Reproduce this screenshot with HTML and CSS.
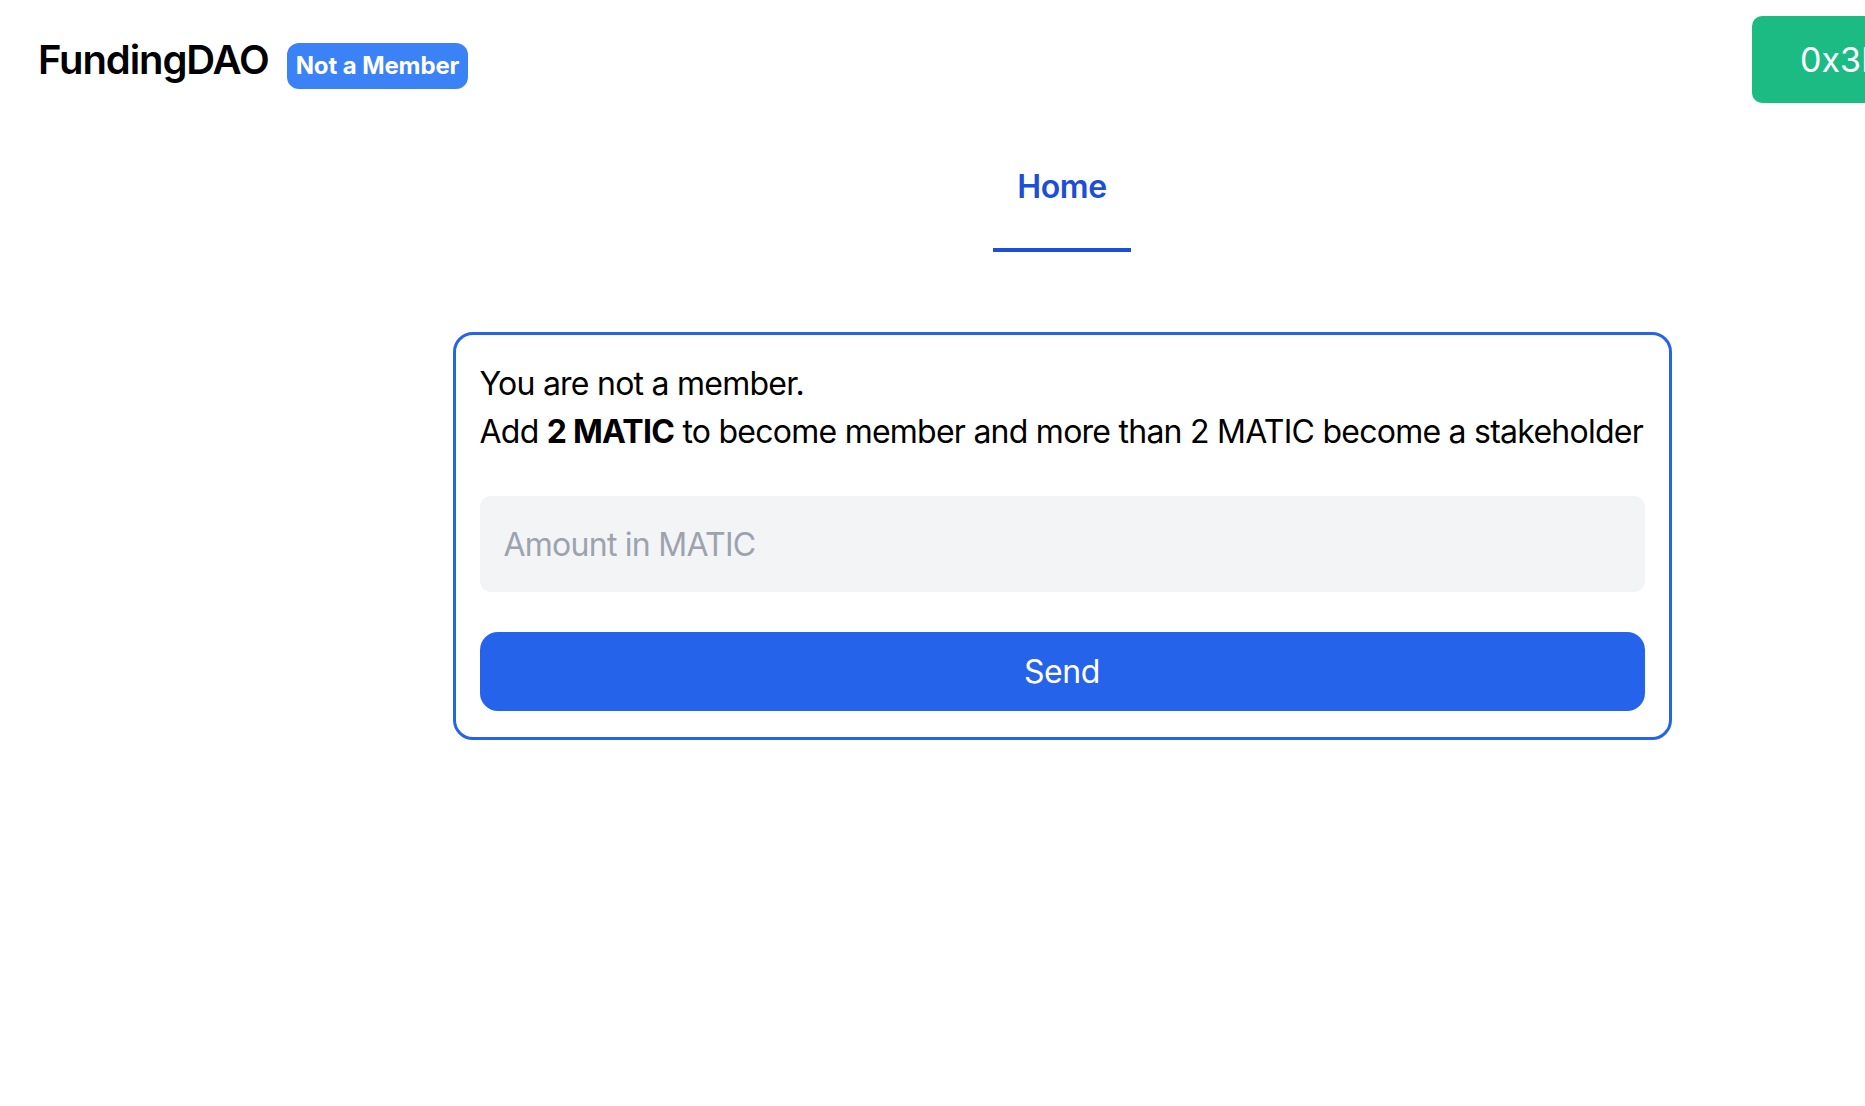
FILE: index.html
```html
<!DOCTYPE html>
<html lang="en">
<head>
<meta charset="utf-8">
<title>FundingDAO</title>
<link rel="stylesheet" href="styles.css">
</head>
<body>
<div class="page">
  <header class="topbar">
    <div class="brand">
      <h1 class="brand-title">FundingDAO</h1>
      <span class="badge">Not a Member</span>
    </div>
    <button class="wallet">0x3B9f...71aC</button>
  </header>

  <nav class="tabs">
    <a class="tab tab-active" href="#">Home</a>
  </nav>

  <main class="card">
    <p class="card-text">You are not a member.</p>
    <p class="card-text">Add <strong>2 MATIC</strong> to become member and more than 2 MATIC become a stakeholder</p>
    <input class="amount" type="text" placeholder="Amount in MATIC">
    <button class="send">Send</button>
  </main>
</div>
</body>
</html>
```

FILE: styles.css
```css
html, body {
  margin: 0;
  padding: 0;
  overflow: hidden;
  background: #ffffff;
}

body {
  font-family: Inter, "Noto Sans", "Liberation Sans", sans-serif;
  color: #000000;
}

.page {
  width: 2124px;
}

.topbar {
  display: flex;
  align-items: flex-start;
  justify-content: space-between;
  padding: 16px 32px 0 38px;
  height: 87px;
}

.brand {
  display: flex;
  align-items: baseline;
  gap: 18px;
  margin-top: 20px;
}

.brand-title {
  margin: 0;
  font-size: 40px;
  line-height: 48px;
  font-weight: 600;
  letter-spacing: -1.1px;
}

.badge {
  display: inline-block;
  background: #3b82f6;
  color: #ffffff;
  font-size: 24px;
  font-weight: 700;
  line-height: 46px;
  padding: 0 9px;
  border-radius: 12px;
  letter-spacing: -0.1px;
}

.wallet {
  width: 340px;
  height: 87px;
  border: none;
  border-radius: 10px;
  background: #1dbb84;
  color: #ffffff;
  font-family: Inter, "Liberation Sans", sans-serif;
  font-size: 34px;
  font-weight: 400;
  text-align: left;
  padding: 0 0 0 48px;
}

.tabs {
  display: flex;
  justify-content: center;
  margin-top: 36px;
}

.tab {
  display: block;
  padding: 24px 24px 37px;
  font-size: 32px;
  line-height: 48px;
  font-weight: 600;
  color: #1d4ed8;
  text-decoration: none;
  border-bottom: 4px solid #1d4ed8;
  letter-spacing: -0.4px;
}

.card {
  box-sizing: border-box;
  width: 1219px;
  margin: 80px auto 0;
  border: 3px solid #2563eb;
  border-radius: 20px;
  padding: 25px 24px 26px;
  display: flex;
  flex-direction: column;
}

.card-text {
  margin: 0;
  font-size: 32px;
  line-height: 48px;
  letter-spacing: -0.75px;
  white-space: nowrap;
}

.card-text strong {
  font-weight: 700;
}

.amount {
  box-sizing: border-box;
  margin-top: 40px;
  height: 96px;
  border: none;
  border-radius: 11px;
  background: #f3f4f6;
  padding: 0 24px;
  font-family: Inter, "Noto Sans", sans-serif;
  font-size: 32px;
  letter-spacing: -0.75px;
  color: #111827;
  outline: none;
}

.amount::placeholder {
  color: #9ca3af;
}

.send {
  margin-top: 40px;
  height: 79px;
  border: none;
  border-radius: 18px;
  background: #2563eb;
  color: #ffffff;
  font-family: Inter, "Noto Sans", sans-serif;
  font-size: 32px;
  font-weight: 400;
  letter-spacing: -0.4px;
}
```
